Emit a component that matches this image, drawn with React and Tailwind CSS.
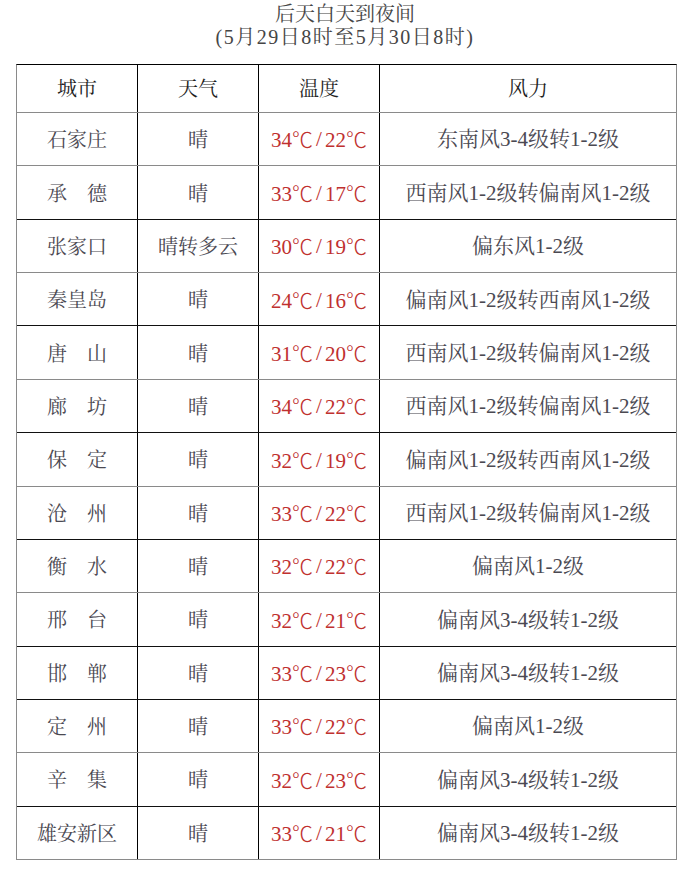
import React from "react";

const rows = [
  ["石家庄", "晴", "34", "22", "东南风3-4级转1-2级", "g"],
  ["承　德", "晴", "33", "17", "西南风1-2级转偏南风1-2级", "b"],
  ["张家口", "晴转多云", "30", "19", "偏东风1-2级", "g"],
  ["秦皇岛", "晴", "24", "16", "偏南风1-2级转西南风1-2级", "b"],
  ["唐　山", "晴", "31", "20", "西南风1-2级转偏南风1-2级", "g"],
  ["廊　坊", "晴", "34", "22", "西南风1-2级转偏南风1-2级", "b"],
  ["保　定", "晴", "32", "19", "偏南风1-2级转西南风1-2级", "g"],
  ["沧　州", "晴", "33", "22", "西南风1-2级转偏南风1-2级", "b"],
  ["衡　水", "晴", "32", "22", "偏南风1-2级", "g"],
  ["邢　台", "晴", "32", "21", "偏南风3-4级转1-2级", "b"],
  ["邯　郸", "晴", "33", "23", "偏南风3-4级转1-2级", "b"],
  ["定　州", "晴", "33", "22", "偏南风1-2级", "g"],
  ["辛　集", "晴", "32", "23", "偏南风3-4级转1-2级", "b"],
  ["雄安新区", "晴", "33", "21", "偏南风3-4级转1-2级", "g"],
];

function Deg() {
  return <span className="font-['Noto_Sans_CJK_SC',sans-serif] font-light">℃</span>;
}

export default function App() {
  return (
    <div className="w-[690px] h-[892px] bg-white font-['Liberation_Serif','Noto_Serif_CJK_SC','Noto_Sans_CJK_SC',serif]">
      <div className="pt-[3px] text-center text-[20px] leading-[23px] text-[#454545]">
        <div>后天白天到夜间</div>
        <div className="tracking-[1.5px]">(5月29日8时至5月30日8时)</div>
      </div>
      <div className="ml-[16px] mt-[15px] w-[661px] border-t-[1.5px] border-t-black border-l border-l-[#8a8a8a] border-r border-r-[#8a8a8a]">
        <div className="flex h-[48px] border-b border-b-[#8a8a8a] text-[20px] text-[#1e1e1e]">
          <div className="w-[121px] flex items-center justify-center border-r-[1.5px] border-r-black">城市</div>
          <div className="w-[121px] flex items-center justify-center border-r-[1.5px] border-r-black">天气</div>
          <div className="w-[121px] flex items-center justify-center border-r-[1.5px] border-r-black">温度</div>
          <div className="flex-1 flex items-center justify-center">风力</div>
        </div>
        {rows.map(([city, wx, hi, lo, wind, line], i) => (
          <div
            key={i}
            className={
              "flex h-[53.36px] text-[20px] text-[#4b4952] " +
              (line === "b"
                ? "border-b-[1.5px] border-b-[#111]"
                : "border-b border-b-[#8a8a8a]")
            }
          >
            <div className="w-[121px] flex items-center justify-center border-r-[1.5px] border-r-black pt-[2px]">
              {city}
            </div>
            <div className="w-[121px] flex items-center justify-center border-r-[1.5px] border-r-black pt-[2px]">
              {wx}
            </div>
            <div className="w-[121px] flex items-center justify-center border-r-[1.5px] border-r-black pt-[2px] text-[21px] text-[#c0302f] whitespace-nowrap">
              <span>{hi}<Deg /></span>
              <span className="mx-[3px]">/</span>
              <span>{lo}<Deg /></span>
            </div>
            <div className="flex-1 flex items-center justify-center pt-[2px] text-[21px] whitespace-nowrap">
              {wind}
            </div>
          </div>
        ))}
      </div>
    </div>
  );
}
